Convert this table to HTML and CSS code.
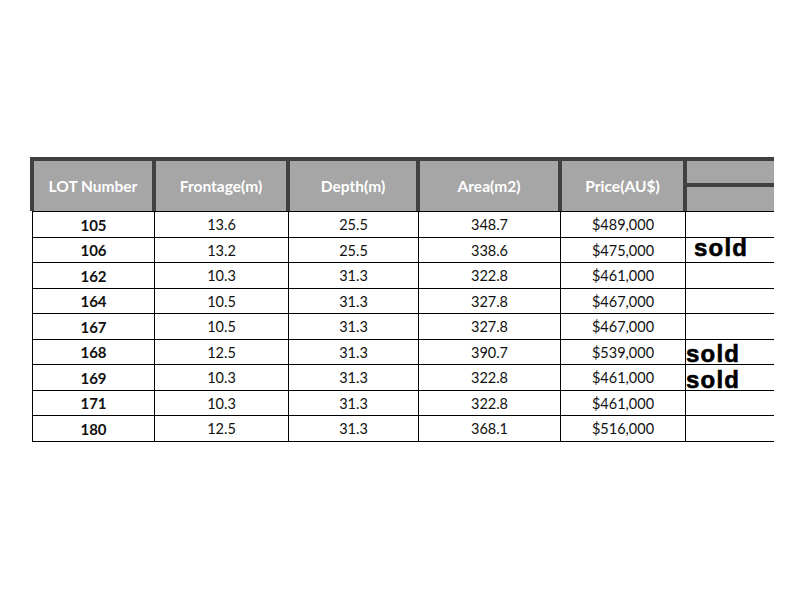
FILE: index.html
```html
<!DOCTYPE html>
<html lang="en">
<head>
<meta charset="utf-8">
<title>Lot prices</title>
<link rel="stylesheet" href="styles.css">
</head>
<body>
<div class="sheet">
  <div class="head">
    <div class="hcell">LOT Number</div>
    <div class="hcell">Frontage(m)</div>
    <div class="hcell">Depth(m)</div>
    <div class="hcell">Area(m2)</div>
    <div class="hcell">Price(AU$)</div>
    <div class="hcell split"><div class="part top"></div><div class="part bottom"></div></div>
  </div>
  <div class="body">
    <div class="row tall"><div class="cell lot">105</div><div class="cell">13.6</div><div class="cell">25.5</div><div class="cell">348.7</div><div class="cell">$489,000</div><div class="cell note"></div></div>
    <div class="row"><div class="cell lot">106</div><div class="cell">13.2</div><div class="cell">25.5</div><div class="cell">338.6</div><div class="cell">$475,000</div><div class="cell note"><span class="sold s1">sold</span></div></div>
    <div class="row tall"><div class="cell lot">162</div><div class="cell">10.3</div><div class="cell">31.3</div><div class="cell">322.8</div><div class="cell">$461,000</div><div class="cell note"></div></div>
    <div class="row"><div class="cell lot">164</div><div class="cell">10.5</div><div class="cell">31.3</div><div class="cell">327.8</div><div class="cell">$467,000</div><div class="cell note"></div></div>
    <div class="row tall"><div class="cell lot">167</div><div class="cell">10.5</div><div class="cell">31.3</div><div class="cell">327.8</div><div class="cell">$467,000</div><div class="cell note"></div></div>
    <div class="row"><div class="cell lot">168</div><div class="cell">12.5</div><div class="cell">31.3</div><div class="cell">390.7</div><div class="cell">$539,000</div><div class="cell note"><span class="sold s2">sold</span></div></div>
    <div class="row tall"><div class="cell lot">169</div><div class="cell">10.3</div><div class="cell">31.3</div><div class="cell">322.8</div><div class="cell">$461,000</div><div class="cell note"><span class="sold s3">sold</span></div></div>
    <div class="row"><div class="cell lot">171</div><div class="cell">10.3</div><div class="cell">31.3</div><div class="cell">322.8</div><div class="cell">$461,000</div><div class="cell note"></div></div>
    <div class="row tall"><div class="cell lot">180</div><div class="cell">12.5</div><div class="cell">31.3</div><div class="cell">368.1</div><div class="cell">$516,000</div><div class="cell note"></div></div>
  </div>
</div>
</body>
</html>
```

FILE: styles.css
```css
html, body {
  margin: 0;
  padding: 0;
  background: #ffffff;
}

.sheet {
  margin: 157px 0 0 30px;
  width: 744px;
  font-family: Lato, "Liberation Sans", sans-serif;
}

.head {
  display: grid;
  grid-template-columns: 118px 130px 126px 138px 121px 87px;
  column-gap: 4px;
  padding: 4px 0 0 4px;
  background: #404040;
}

.hcell {
  height: 50px;
  background: #a6a6a6;
  color: #ffffff;
  font-weight: 700;
  font-size: 15.5px;
  display: flex;
  align-items: center;
  justify-content: center;
}

.hcell.split {
  flex-direction: column;
  align-items: stretch;
  justify-content: space-between;
  background: #404040;
}

.part {
  background: #a6a6a6;
}

.part.top {
  height: 22px;
}

.part.bottom {
  height: 24px;
}

.body {
  margin-left: 2px;
  width: 742px;
  border-top: 1px solid #000000;
}

.row {
  display: grid;
  grid-template-columns: 122px 134px 130px 142px 125px 89px;
  height: 24px;
  border-bottom: 1px solid #000000;
}

.row.tall {
  height: 25px;
}

.cell {
  border-left: 1px solid #000000;
  display: flex;
  align-items: center;
  justify-content: center;
  font-size: 14.5px;
  color: #111111;
}

.cell.lot {
  font-weight: 700;
  font-size: 15px;
}

.cell.note {
  align-items: flex-start;
  justify-content: flex-start;
}

.sold {
  font-family: "Liberation Sans", Arial, sans-serif;
  font-weight: 700;
  font-size: 24px;
  line-height: 20px;
  letter-spacing: 1.2px;
  color: #000000;
  -webkit-text-stroke: 0.6px #000000;
  white-space: nowrap;
}

.s1 {
  padding-left: 8px;
}

.s2 {
  padding: 4px 0 0 0;
}

.s3 {
  padding: 5px 0 0 0;
}
```
